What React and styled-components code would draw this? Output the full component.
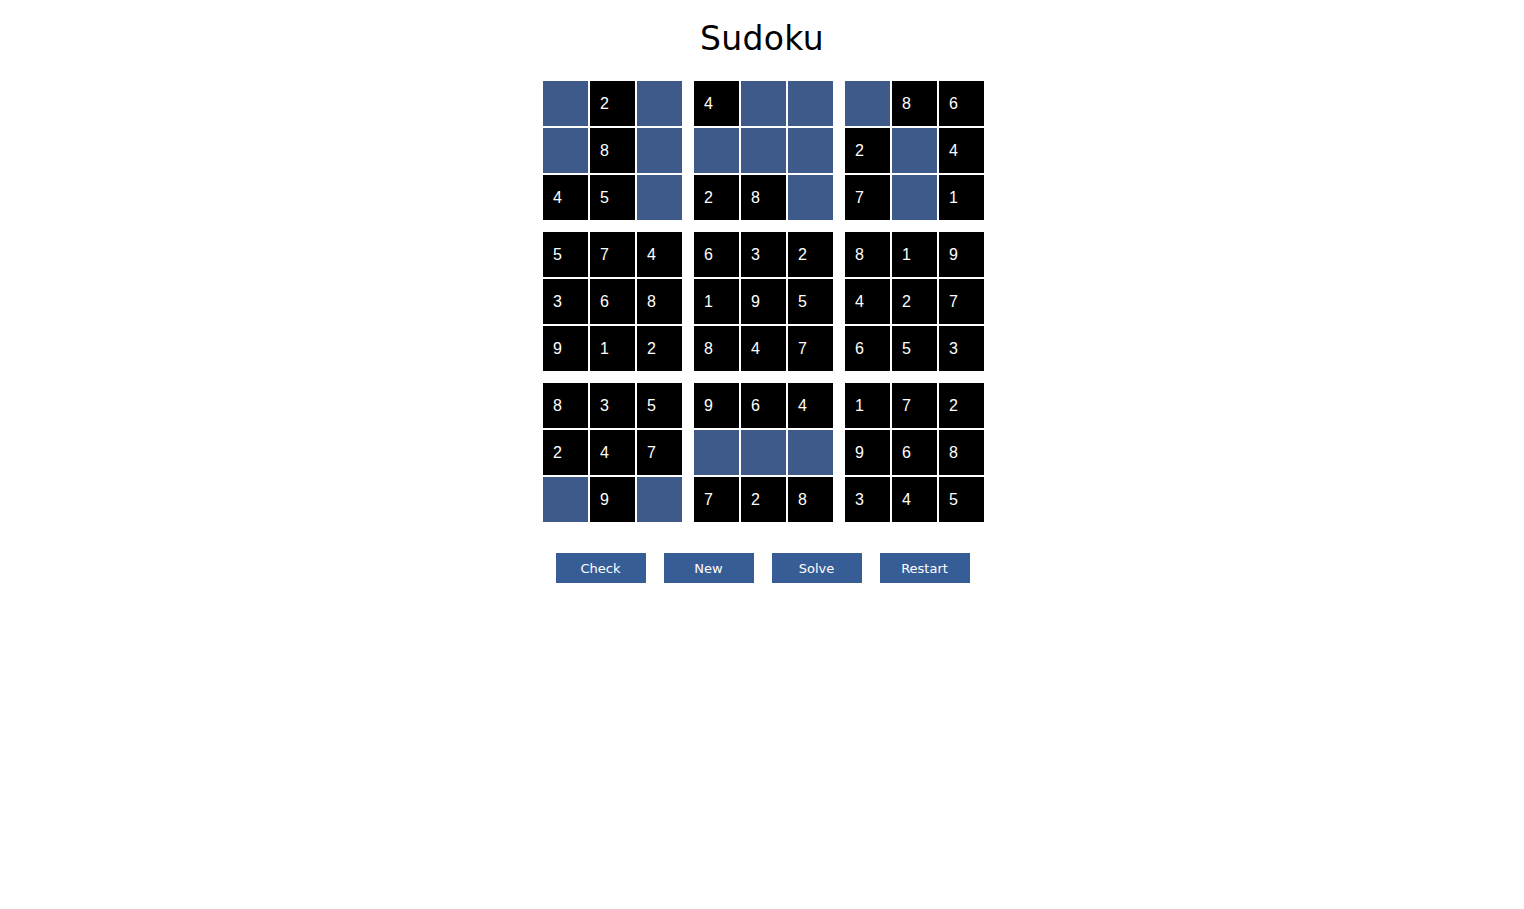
import React from 'react';
import styled, { createGlobalStyle } from 'styled-components';

const GlobalStyle = createGlobalStyle`
  body {
    margin: 0;
    background: #fff;
    font-family: "Liberation Sans", Arial, sans-serif;
  }
`

const board = [
  [0, 2, 0, 4, 0, 0, 0, 8, 6],
  [0, 8, 0, 0, 0, 0, 2, 0, 4],
  [4, 5, 0, 2, 8, 0, 7, 0, 1],
  [5, 7, 4, 6, 3, 2, 8, 1, 9],
  [3, 6, 8, 1, 9, 5, 4, 2, 7],
  [9, 1, 2, 8, 4, 7, 6, 5, 3],
  [8, 3, 5, 9, 6, 4, 1, 7, 2],
  [2, 4, 7, 0, 0, 0, 9, 6, 8],
  [0, 9, 0, 7, 2, 8, 3, 4, 5],
]

const Page = styled.div`
  display: flex;
  flex-direction: column;
  align-items: center;
  padding-top: 18px;
`

const Title = styled.h1`
  margin: 0 0 21px;
  font-family: "DejaVu Sans", "Open Sans", sans-serif;
  font-weight: 400;
  font-size: 33px;
  line-height: 42px;
  color: #000;
  letter-spacing: 0.3px;
`

const Board = styled.div`
  display: grid;
  grid-template-columns: repeat(3, 139px);
  gap: 12px;
  margin-left: 3px;
`

const Box = styled.div`
  display: grid;
  grid-template-columns: repeat(3, 45px);
  grid-auto-rows: 45px;
  gap: 2px;
`

const Cell = styled.div`
  display: flex;
  align-items: center;
  padding-left: 10px;
  box-sizing: border-box;
  background: ${props => props.empty ? '#3d5a8b' : '#000'};
  color: #fff;
  font-family: "Liberation Sans", Arial, sans-serif;
  font-size: 16px;
`

const Buttons = styled.div`
  display: flex;
  gap: 18px;
  margin-top: 31px;
  margin-left: 1px;
`

const Button = styled.button`
  width: 90px;
  height: 30px;
  border: none;
  padding: 0;
  background: #375d97;
  color: #fff;
  font-family: "DejaVu Sans", "Open Sans", sans-serif;
  font-size: 13px;
`

const boxCells = (b) => {
  const br = Math.floor(b / 3) * 3
  const bc = (b % 3) * 3
  const cells = []
  for (let r = 0; r < 3; r++) {
    for (let c = 0; c < 3; c++) {
      cells.push(board[br + r][bc + c])
    }
  }
  return cells
}

export default function App() {
  return (
    <Page>
      <GlobalStyle />
      <Title>Sudoku</Title>
      <Board>
        {[0, 1, 2, 3, 4, 5, 6, 7, 8].map(b => (
          <Box key={b}>
            {boxCells(b).map((v, i) => (
              <Cell key={i} empty={v === 0}>{v || ''}</Cell>
            ))}
          </Box>
        ))}
      </Board>
      <Buttons>
        <Button>Check</Button>
        <Button>New</Button>
        <Button>Solve</Button>
        <Button>Restart</Button>
      </Buttons>
    </Page>
  )
}
